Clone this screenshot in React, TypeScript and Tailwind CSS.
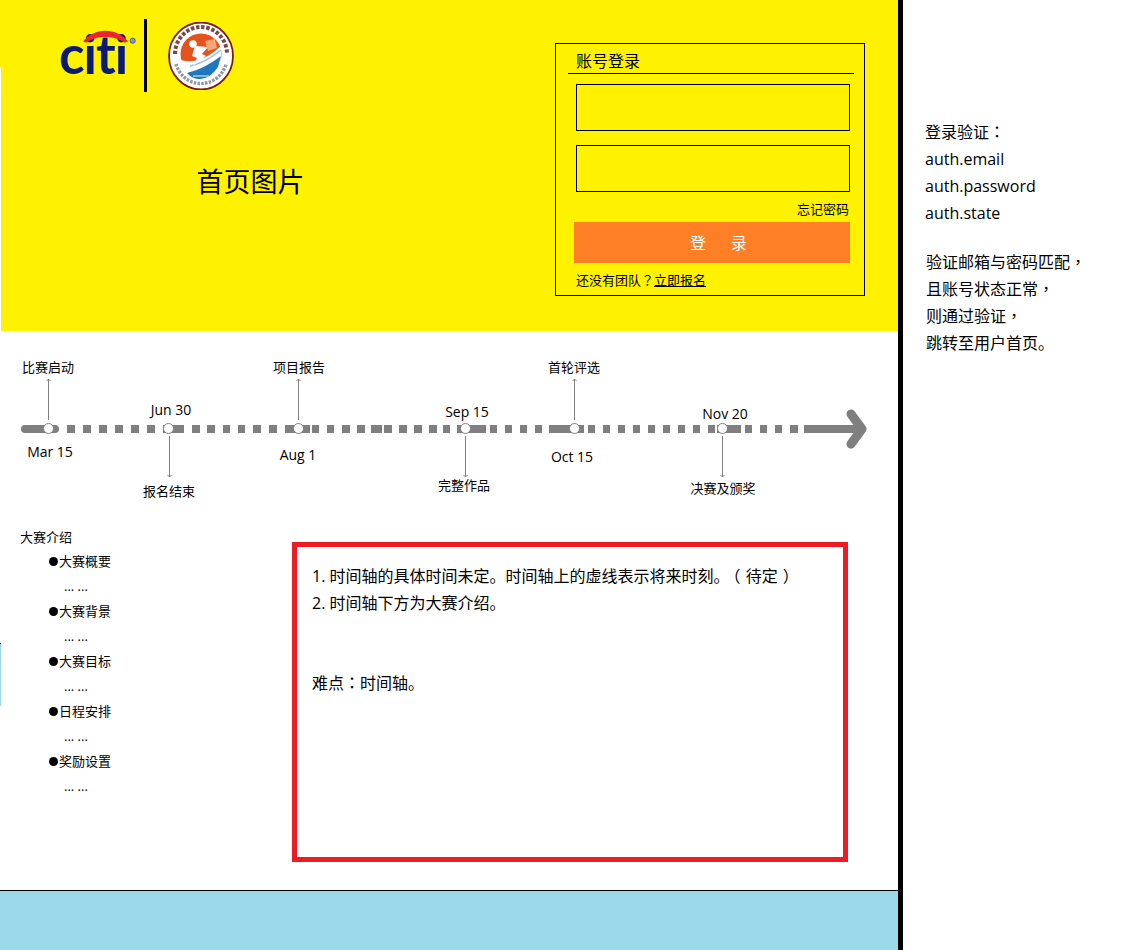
import type { ReactNode } from 'react';

const dashes: [number, number][] = [
  [67, 75], [83, 91], [99, 107], [115, 123], [131, 139], [147, 155],
  [163, 184], [192, 200], [207, 215], [223, 230], [238, 245], [253, 261], [269, 277],
  [285, 310], [312, 319], [327, 334], [342, 350], [357, 365], [371, 382], [384, 392],
  [399, 407], [414, 422], [429, 437], [443, 450], [457, 486], [490, 497], [505, 512],
  [520, 527], [535, 542], [549, 584], [588, 595], [603, 610], [618, 625], [633, 640],
  [648, 655], [663, 670], [678, 685], [693, 700], [708, 715], [717, 741], [745, 752], [760, 767],
  [775, 782], [790, 798], [804, 858],
];

const stems = [
  { x: 48, up: true },
  { x: 169, up: false },
  { x: 298, up: true },
  { x: 465, up: false },
  { x: 574, up: true },
  { x: 722, up: false },
];

const nodes = [48, 168, 298, 465, 574, 722];

const labels = [
  { text: '比赛启动', cls: 'left-[48px] top-[26px] text-[13px]' },
  { text: 'Mar 15', cls: 'left-[50px] top-[111px] text-[14px]' },
  { text: 'Jun 30', cls: 'left-[171px] top-[69px] text-[14px]' },
  { text: '报名结束', cls: 'left-[169px] top-[150px] text-[13px]' },
  { text: '项目报告', cls: 'left-[299px] top-[26px] text-[13px]' },
  { text: 'Aug 1', cls: 'left-[298px] top-[114px] text-[14px]' },
  { text: 'Sep 15', cls: 'left-[467px] top-[71px] text-[14px]' },
  { text: '完整作品', cls: 'left-[464px] top-[144px] text-[13px]' },
  { text: '首轮评选', cls: 'left-[574px] top-[26px] text-[13px]' },
  { text: 'Oct 15', cls: 'left-[572px] top-[116px] text-[14px]' },
  { text: 'Nov 20', cls: 'left-[725px] top-[73px] text-[14px]' },
  { text: '决赛及颁奖', cls: 'left-[723px] top-[147px] text-[13px]' },
];

const intro = ['大赛概要', '大赛背景', '大赛目标', '日程安排', '奖励设置'];

// the TC cut of the font centres these marks in their cell, as the picture does
function Mark({ children }: { children: ReactNode }) {
  return <span className="font-['Noto_Sans_CJK_TC'] leading-none">{children}</span>;
}

function CitiLogo() {
  return (
    <div className="relative h-[60px] w-[78px]">
      <span className="absolute left-[3px] top-[-5px] text-[53px] leading-[60px] font-bold tracking-[-1px] text-[#0b1a72] font-['Lato',sans-serif]">
        citi
      </span>
      <svg className="absolute left-0 top-0 overflow-visible" width="78" height="60" viewBox="0 0 78 60">
        <path d="M27 12.5 C 38 -2, 61 -2, 72 12.5 L 68.5 13.5 C 59 6, 40 6, 30.5 13.5 Z" fill="#e8262c" />
        <circle cx="76.7" cy="11.7" r="2.6" fill="#8a94c0" stroke="#3f4c90" strokeWidth="0.8" />
      </svg>
    </div>
  );
}

function Seal() {
  return (
    <svg width="66" height="68" viewBox="0 0 66 68">
      <ellipse cx="33" cy="34" rx="32" ry="33.5" fill="#fff" stroke="#7c1c14" strokeWidth="1.8" />
      <path d="M7 32 A 26 27 0 0 1 59 32" fill="none" stroke="#5c1a14" strokeWidth="4" strokeDasharray="3.4 1.8" opacity="0.8" />
      <path d="M8 42 A 26 27 0 0 0 58 42" fill="none" stroke="#6c7590" strokeWidth="3.4" strokeDasharray="2.6 1.2" opacity="0.75" />
      <circle cx="33" cy="32" r="20.5" fill="#e4521e" />
      <path d="M13 38 Q 32 44 54 23 L 52 44 Q 44 56 32 56 Q 20 54 13 38 Z" fill="#fff" />
      <path d="M19 51 Q 36 47 53 34 L 50 45 Q 42 57 32 57 Q 24 57 19 51 Z" fill="#1f78bd" />
      <path d="M22 44 Q 37 41 53 28" fill="none" stroke="#8cc4e6" strokeWidth="1.6" />
      <path d="M25 54 L 41 54" stroke="#cfe4f2" strokeWidth="1.2" />
      <path d="M27 24 L 40 25 L 34 32 L 38 34 L 25 44 L 29 36 L 24 34 Z" fill="#fff" />
      <circle cx="25" cy="22" r="3.8" fill="#fff" />
      <path d="M37 19 L 47 17 L 49 26 L 40 29 Z" fill="#f3a878" />
    </svg>
  );
}

function Hero() {
  return (
    <section className="relative flex h-[331px] bg-[#fff200]">
      <div className="absolute left-0 top-[67px] bottom-0 w-px bg-white" />
      <div className="w-[555px] shrink-0 pt-[19px]">
        <div className="flex h-[73px] items-start pl-[56px]">
          <div className="mt-[10px]">
            <CitiLogo />
          </div>
          <div className="ml-[10px] h-[73px] w-[3px] bg-black" />
          <div className="ml-[21px] mt-[3px]">
            <Seal />
          </div>
        </div>
        <h1 className="mt-[71px] pr-[54px] text-center text-[27px] leading-[38px] font-normal text-black">首页图片</h1>
      </div>
      <LoginCard />
    </section>
  );
}

function LoginCard() {
  return (
    <div className="mt-[43px] flex h-[253px] w-[310px] flex-col border border-black">
      <div className="ml-[12px] mr-[10px] mt-[6px] h-[24px] border-b border-black pl-[8px] text-[16px] leading-[23px] text-black">账号登录</div>
      <div className="mt-[10px] ml-[20px] h-[47px] w-[274px] border border-black" />
      <div className="mt-[14px] ml-[20px] h-[47px] w-[274px] border border-black" />
      <a className="mt-[8px] mr-[15px] self-end text-[13px] leading-[18px] text-black">忘记密码</a>
      <button className="mt-[4px] ml-[18px] flex h-[41px] w-[276px] items-center justify-center gap-[25px] bg-[#ff7f27] pl-[13px] text-[16px] text-white">
        <span>登</span>
        <span>录</span>
      </button>
      <p className="mt-[8px] ml-[20px] text-[13px] leading-[18px] text-black">
        还没有团队<Mark>？</Mark>
        <a className="underline">立即报名</a>
      </p>
    </div>
  );
}

function Timeline() {
  return (
    <section className="relative h-[190px]">
      <svg className="absolute inset-0" width="898" height="190" viewBox="0 331 898 190">
        <rect x="21" y="425" width="38" height="8" rx="4" fill="#7f7f7f" />
        {dashes.map(([a, b]) => (
          <rect key={a} x={a} y="425" width={b - a} height="8" fill="#7f7f7f" />
        ))}
        <path d="M851 414 L862 429 L851 444" fill="none" stroke="#7f7f7f" strokeWidth="9" strokeLinecap="round" strokeLinejoin="round" />
        {stems.map(({ x, up }) =>
          up ? (
            <g key={x} fill="none" stroke="#7f7f7f" strokeWidth="1">
              <path d={`M${x + 0.5} 420 V379`} />
              <path d={`M${x - 1.5} 381 L${x + 0.5} 379 L${x + 2.5} 381`} />
            </g>
          ) : (
            <g key={x} fill="none" stroke="#7f7f7f" strokeWidth="1">
              <path d={`M${x + 0.5} 436 V477`} />
              <path d={`M${x - 1.5} 475 L${x + 0.5} 477 L${x + 2.5} 475`} />
            </g>
          ),
        )}
        {nodes.map((x) => (
          <circle key={x} cx={x + 0.5} cy="428.5" r="5" fill="#fff" stroke="#7f7f7f" strokeWidth="1" />
        ))}
      </svg>
      {labels.map((l) => (
        <span key={l.text} className={`absolute -translate-x-1/2 whitespace-nowrap leading-5 text-black ${l.cls}`}>
          {l.text}
        </span>
      ))}
    </section>
  );
}

function IntroList() {
  return (
    <div className="w-[292px] shrink-0 pl-[20px] pt-[4px] text-[13px] leading-[25px] text-black">
      <div>大赛介绍</div>
      <ul className="-mt-px pl-[29px]">
        {intro.map((item) => (
          <li key={item}>
            <div className="flex items-center">
              <span className="mr-px h-[9px] w-[9px] rounded-full bg-black" />
              {item}
            </div>
            <div className="pl-[15px]">... ...</div>
          </li>
        ))}
      </ul>
    </div>
  );
}

function Notes() {
  return (
    <div className="mt-[21px] h-[320px] w-[556px] border-[5px] border-[#ed1c24] pl-[15px] pt-[16px] text-[16px] leading-[27px] text-black">
      <p>
        1. 时间轴的具体时间未定。时间轴上的虚线表示将来时刻。
        <span className="ml-[3px] [word-spacing:1px]">（ 待定 ）</span>
      </p>
      <p>2. 时间轴下方为大赛介绍。</p>
      <p className="mt-[53px]">
        难点<Mark>：</Mark>时间轴。
      </p>
    </div>
  );
}

function Sidebar() {
  return (
    <aside className="flex-1 pl-[22px] pt-[119px] text-[16px] leading-[27px] text-black">
      <p>
        登录验证<Mark>：</Mark>
      </p>
      <p>auth.email</p>
      <p>auth.password</p>
      <p>auth.state</p>
      <div className="mt-[22px] pl-px">
        <p>
          验证邮箱与密码匹配<Mark>，</Mark>
        </p>
        <p>
          且账号状态正常<Mark>，</Mark>
        </p>
        <p>
          则通过验证<Mark>，</Mark>
        </p>
        <p>跳转至用户首页。</p>
      </div>
    </aside>
  );
}

export default function App() {
  return (
    <div className="flex h-[950px] w-[1148px] overflow-hidden bg-white font-['Open_Sans','Noto_Sans_CJK_SC',sans-serif]">
      <main className="relative flex w-[898px] shrink-0 flex-col">
        <Hero />
        <Timeline />
        <section className="flex h-[369px]">
          <IntroList />
          <Notes />
        </section>
        <footer className="flex-1 border-t border-black bg-[#99d9ea]" />
        <div className="absolute left-0 top-[643px] h-[63px] w-px border-t border-black bg-[#99d9ea]" />
      </main>
      <div className="w-[5px] shrink-0 bg-black" />
      <Sidebar />
    </div>
  );
}
